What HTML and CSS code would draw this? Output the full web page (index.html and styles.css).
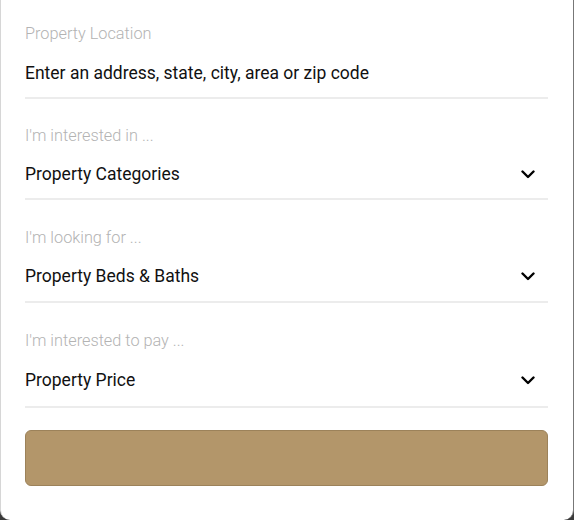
FILE: index.html
```html
<!DOCTYPE html>
<html>
<head>
<meta charset="utf-8">
<link rel="stylesheet" href="styles.css">
</head>
<body>
<div class="card">
  <form class="search-form">
    <div class="field">
      <div class="label">Property Location</div>
      <div class="value">Enter an address, state, city, area or zip code</div>
    </div>
    <div class="field">
      <div class="label">I'm interested in ...</div>
      <div class="value select"><span>Property Categories</span><svg class="chev" width="14" height="9" viewBox="0 0 14 9"><path d="M1.5 1.5 L7 7 L12.5 1.5" fill="none" stroke="#000" stroke-width="2.4" stroke-linecap="round" stroke-linejoin="round"/></svg></div>
    </div>
    <div class="field">
      <div class="label">I'm looking for ...</div>
      <div class="value select"><span>Property Beds &amp; Baths</span><svg class="chev" width="14" height="9" viewBox="0 0 14 9"><path d="M1.5 1.5 L7 7 L12.5 1.5" fill="none" stroke="#000" stroke-width="2.4" stroke-linecap="round" stroke-linejoin="round"/></svg></div>
    </div>
    <div class="field">
      <div class="label">I'm interested to pay ...</div>
      <div class="value select"><span>Property Price</span><svg class="chev" width="14" height="9" viewBox="0 0 14 9"><path d="M1.5 1.5 L7 7 L12.5 1.5" fill="none" stroke="#000" stroke-width="2.4" stroke-linecap="round" stroke-linejoin="round"/></svg></div>
    </div>
    <div class="submit"></div>
  </form>
</div>
</body>
</html>
```
FILE: styles.css
```css
html, body {
  margin: 0;
  padding: 0;
  background: #3a3a3a;
}
.card {
  box-sizing: border-box;
  width: 574px;
  height: 520px;
  background: #fff;
  border-left: 1px solid #d6d6d6;
  border-right: 1px solid #777;
  border-radius: 0 0 10px 10px;
  font-family: Roboto, "Liberation Sans", sans-serif;
}
.search-form {
  display: flex;
  flex-direction: column;
  padding: 0 25px 0 24px;
}
.field {
  display: flex;
  flex-direction: column;
  padding-top: 28px;
  padding-bottom: 12px;
  border-bottom: 2px solid #ececec;
}
.field:nth-child(1) {
  padding-top: 24px;
}
.field:nth-child(2) {
  padding-top: 27px;
}
.field:nth-child(3) {
  padding-bottom: 13px;
}
.field:nth-child(4) {
  padding-bottom: 14px;
}
.label {
  font-size: 16.3px;
  line-height: 20px;
  font-weight: 300;
  color: #b3b3b3;
}
.value {
  margin-top: 16px;
  font-size: 17.5px;
  line-height: 24px;
  color: #111;
}
.field:nth-child(1) .value,
.field:nth-child(4) .value {
  margin-top: 17px;
}
.select {
  display: flex;
  align-items: center;
  justify-content: space-between;
  padding-right: 13px;
}
.chev {
  display: block;
}
.submit {
  margin-top: 22px;
  height: 56px;
  box-sizing: border-box;
  background: #b3966a;
  border: 1px solid #9c825a;
  border-radius: 6px;
}
```
